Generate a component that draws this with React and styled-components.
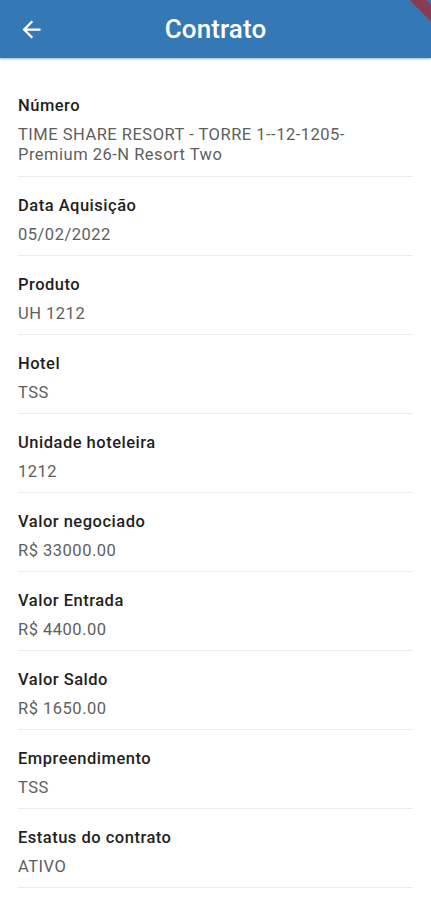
import React from 'react'
import styled, { createGlobalStyle } from 'styled-components'

const GlobalStyle = createGlobalStyle`
  body {
    margin: 0;
    background: #ffffff;
    font-family: Roboto, "Noto Sans", "Liberation Sans", sans-serif;
    font-variant-ligatures: none;
  }
`

const Page = styled.div`
  width: 431px;
  min-height: 900px;
  background: #ffffff;
`

const AppBar = styled.header`
  position: relative;
  height: 58px;
  display: grid;
  grid-template-columns: 60px 1fr 60px;
  align-items: center;
  background: #3478b6;
  color: #ffffff;
  overflow: hidden;
  box-shadow: 0 1px 2px rgba(40, 90, 140, 0.45);
`

const BackButton = styled.button`
  display: flex;
  align-items: center;
  padding: 0 0 0 18px;
  margin: 0;
  border: 0;
  background: none;
  color: inherit;
  cursor: pointer;
`

const Title = styled.h1`
  margin: 0;
  text-align: center;
  font-size: 26px;
  font-weight: 500;
  letter-spacing: 0.1px;
`

const DebugBanner = styled.div`
  position: absolute;
  left: 384px;
  top: 0px;
  width: 80px;
  height: 12px;
  background: rgba(183, 28, 28, 0.63);
  transform: rotate(45deg);
`

const List = styled.div`
  padding: 22px 18px 0;
`

const Item = styled.div`
  padding: 19px 0 10px;
  border-bottom: 1.5px solid #ececec;

  &:first-child {
    padding-top: 16px;
    padding-bottom: 11px;
  }
`

const Label = styled.div`
  font-size: 16.5px;
  line-height: 20px;
  font-weight: 500;
  letter-spacing: 0.5px;
  color: #1f1f1f;
`

const Value = styled.div`
  margin-top: 9px;
  font-size: 16.5px;
  line-height: 20px;
  letter-spacing: 0.5px;
  color: #5e5e5e;
`

const fields = [
  { label: 'Número', value: 'TIME SHARE RESORT - TORRE 1--12-1205-Premium 26-N Resort Two' },
  { label: 'Data Aquisição', value: '05/02/2022' },
  { label: 'Produto', value: 'UH 1212' },
  { label: 'Hotel', value: 'TSS' },
  { label: 'Unidade hoteleira', value: '1212' },
  { label: 'Valor negociado', value: 'R$ 33000.00' },
  { label: 'Valor Entrada', value: 'R$ 4400.00' },
  { label: 'Valor Saldo', value: 'R$ 1650.00' },
  { label: 'Empreendimento', value: 'TSS' },
  { label: 'Estatus do contrato', value: 'ATIVO' },
]

const ArrowBack = () => (
  <svg width="27" height="27" viewBox="0 0 24 24" fill="currentColor">
    <path d="M20 11H7.83l5.59-5.59L12 4l-8 8 8 8 1.41-1.41L7.83 13H20v-2z" />
  </svg>
)

export default function App() {
  return (
    <Page>
      <GlobalStyle />
      <AppBar>
        <BackButton aria-label="Voltar">
          <ArrowBack />
        </BackButton>
        <Title>Contrato</Title>
        <span />
        <DebugBanner />
      </AppBar>
      <List>
        {fields.map(f => (
          <Item key={f.label}>
            <Label>{f.label}</Label>
            <Value>{f.value}</Value>
          </Item>
        ))}
      </List>
    </Page>
  )
}
